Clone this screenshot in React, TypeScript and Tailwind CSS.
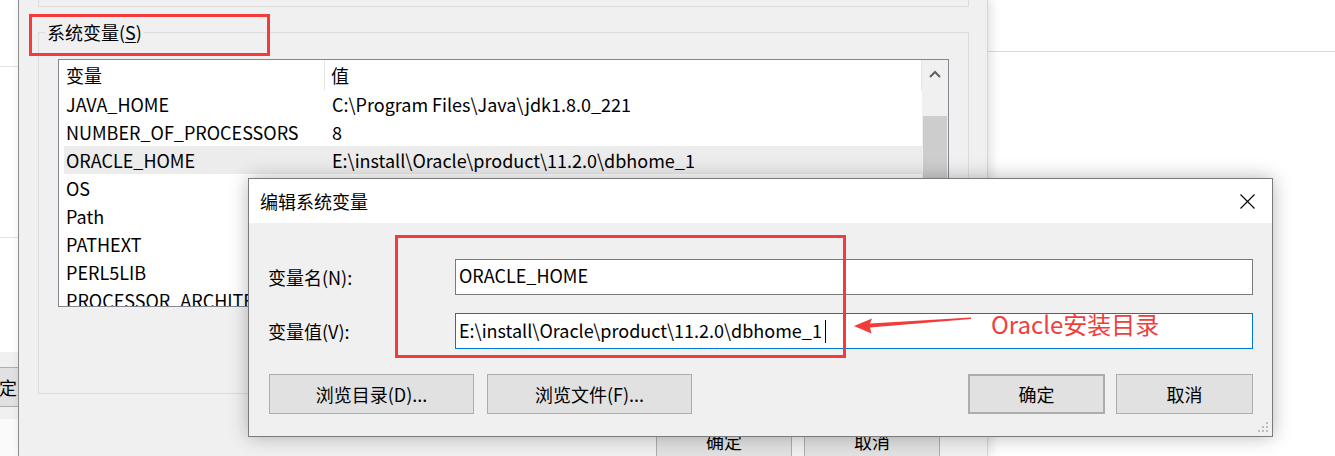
const rows = [
  { name: "JAVA_HOME", value: "C:\\Program Files\\Java\\jdk1.8.0_221" },
  { name: "NUMBER_OF_PROCESSORS", value: "8" },
  { name: "ORACLE_HOME", value: "E:\\install\\Oracle\\product\\11.2.0\\dbhome_1", active: true },
  { name: "OS", value: "Windows_NT" },
  { name: "Path", value: "" },
  { name: "PATHEXT", value: "" },
  { name: "PERL5LIB", value: "" },
  { name: "PROCESSOR_ARCHITECTURE", value: "AMD64" },
];

function WinButton({ label, className = "" }: { label: string; className?: string }) {
  return (
    <div
      className={`h-[40px] flex items-center justify-center bg-[#e1e1e1] border border-[#adadad] whitespace-nowrap ${className}`}
    >
      {label}
    </div>
  );
}

function LeftStrip() {
  return (
    <div className="w-[18px] shrink-0 flex flex-col bg-white">
      <div className="h-[66px]" />
      <div className="h-[171px] border-t border-[#e3e3e3]" />
      <div className="h-[115px] border-t border-[#e3e3e3]" />
      <div className="h-[15px] bg-[#f0f0f0]" />
      <div className="h-[40px] bg-[#e1e1e1] border-y border-[#adadad] flex items-center justify-end overflow-hidden">
        <span className="shrink-0 whitespace-nowrap pr-px">确定</span>
      </div>
      <div className="h-[12px] bg-[#f0f0f0]" />
      <div className="flex-1 bg-[#fafafa]" />
    </div>
  );
}

function SysVarWindow() {
  return (
    <div className="relative z-10 w-[970px] shrink-0 bg-[#f0f0f0] border-l border-[#8c8c8c] border-r border-r-[#d4d4d4] shadow-[3px_0_10px_rgba(0,0,0,0.12)] pl-[19px] pr-[18px]">
      {/* 用户变量 group (bottom edge) */}
      <div className="h-[7px] border-x border-b border-[#dcdcdc]" />

      {/* 系统变量 group */}
      <div className="relative mt-[25px] h-[362px] border border-[#dcdcdc]">
        <div className="absolute left-[6px] -top-[12px] px-[2px] bg-[#f0f0f0] leading-[22px]">
          系统变量(<span className="underline underline-offset-2">S</span>)
        </div>

        <div className="ml-[19px] mt-[26px] w-[891px] h-[248px] border border-[#828790] bg-white flex overflow-hidden">
          <div className="flex-1 flex flex-col">
            <div className="h-[30px] flex shrink-0">
              <div className="w-[266px] pl-[7px] flex items-center border-r border-[#e5e5e5]">变量</div>
              <div className="flex-1 pl-[6px] flex items-center border-r border-[#e5e5e5]">值</div>
            </div>
            {rows.map((r) => (
              <div
                key={r.name}
                className={`h-[28px] shrink-0 ml-[5px] flex whitespace-nowrap leading-[28px] ${r.active ? "bg-[#ececec]" : ""}`}
              >
                <span className="w-[266px] shrink-0 pl-[2px] overflow-hidden">{r.name}</span>
                <span className="pl-[2px]">{r.value}</span>
              </div>
            ))}
          </div>

          {/* scrollbar */}
          <div className="w-[26px] shrink-0 bg-[#f0f0f0] flex flex-col items-center">
            <div className="h-[30px] flex items-center justify-center">
              <svg width="12" height="8" viewBox="0 0 12 8">
                <path d="M1 7 L6 2 L11 7" fill="none" stroke="#606060" strokeWidth="2" />
              </svg>
            </div>
            <div className="mt-[27px] w-[24px] h-[200px] bg-[#cdcdcd]" />
          </div>
        </div>
      </div>

      <div className="mt-[27px] flex justify-end gap-[12px] pr-[29px]">
        <WinButton label="确定" className="w-[136px]" />
        <WinButton label="取消" className="w-[136px]" />
      </div>
    </div>
  );
}

function EditDialog() {
  return (
    <div className="absolute z-20 left-[248px] top-[178px] w-[1025px] h-[259px] border border-[#7b7b7b] bg-[#f0f0f0] shadow-[0_0_18px_rgba(0,0,0,0.28)] flex flex-col">
      <div className="h-[44px] shrink-0 bg-white flex items-center justify-between pl-[11px] pr-[17px]">
        <span>编辑系统变量</span>
        <svg width="15" height="15" viewBox="0 0 15 15">
          <path d="M0.5 0.5 L14.5 14.5 M14.5 0.5 L0.5 14.5" stroke="#000" strokeWidth="1.1" />
        </svg>
      </div>

      <div className="flex-1 px-[19px] pt-[36px] relative">
        <div className="flex items-center h-[36px]">
          <span className="w-[187px] shrink-0">变量名(N):</span>
          <div className="flex-1 h-full border border-[#7a7a7a] bg-white flex items-center pl-[3px] pb-[4px]">
            ORACLE_HOME
          </div>
        </div>
        <div className="flex items-center h-[36px] mt-[18px]">
          <span className="w-[187px] shrink-0">变量值(V):</span>
          <div className="flex-1 h-full border border-[#0078d7] bg-white flex items-center pl-[3px] pb-[2px] whitespace-nowrap">
            E:\install\Oracle\product\11.2.0\dbhome_1
            <span className="inline-block w-px h-[23px] bg-black ml-[3px] mt-[2px]" />
          </div>
        </div>

        <div className="flex mt-[25px] pl-px">
          <WinButton label="浏览目录(D)..." className="w-[205px]" />
          <WinButton label="浏览文件(F)..." className="w-[205px] ml-[13px]" />
          <WinButton label="确定" className="w-[137px] ml-auto border-2 border-[#0078d7]" />
          <WinButton label="取消" className="w-[137px] ml-[11px]" />
        </div>

        {/* size grip */}
        <svg className="absolute right-[3px] bottom-[3px]" width="11" height="11" viewBox="0 0 11 11">
          <g fill="#bdbdbd">
            <rect x="8" y="0" width="2" height="2" />
            <rect x="4" y="4" width="2" height="2" />
            <rect x="8" y="4" width="2" height="2" />
            <rect x="0" y="8" width="2" height="2" />
            <rect x="4" y="8" width="2" height="2" />
            <rect x="8" y="8" width="2" height="2" />
          </g>
        </svg>
      </div>
    </div>
  );
}

export default function App() {
  return (
    <div className="relative w-[1335px] h-[456px] overflow-hidden bg-white flex font-['Noto_Sans_CJK_SC',sans-serif] text-[18px] leading-none text-black">
      <LeftStrip />
      <SysVarWindow />
      <div className="flex-1 bg-white pt-[51px]">
        <div className="border-t border-[#d9d9d9]" />
      </div>

      <EditDialog />

      {/* annotations */}
      <div className="absolute z-30 left-[29px] top-[14px] w-[241px] h-[42px] border-[3px] border-[#f43b3b]" />
      <div className="absolute z-30 left-[395px] top-[235px] w-[451px] h-[123px] border-[3px] border-[#f43b3b]" />
      <svg className="absolute z-30 left-[850px] top-[310px]" width="125" height="30" viewBox="850 310 125 30">
        <polygon
          points="854,326 872,318.5 870,323.5 971,317.6 971,319 870,327.5 871.5,333.5"
          fill="#f43b3b"
        />
      </svg>
      <div className="absolute z-30 left-[991px] top-[309px] text-[24px] leading-[30px] text-[#f23d3d] whitespace-nowrap">
        Oracle安装目录
      </div>
    </div>
  );
}
